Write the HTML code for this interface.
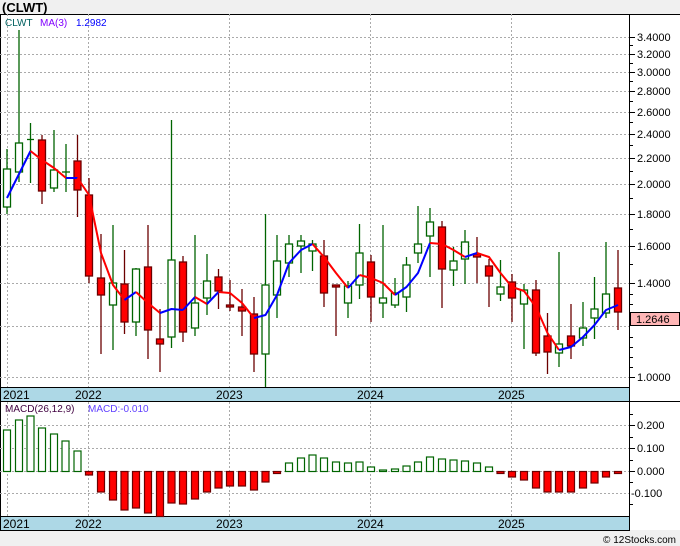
<!DOCTYPE html>
<html><head><style>
html,body{margin:0;padding:0;background:#f0f0f0;width:680px;height:546px;overflow:hidden}
svg{display:block;font-family:"Liberation Sans","DejaVu Sans",sans-serif}
</style></head><body>
<svg width="680" height="546" viewBox="0 0 680 546" xmlns="http://www.w3.org/2000/svg">
<rect x="0" y="0" width="680" height="546" fill="#f0f0f0"/>
<text x="2" y="12" font-size="13" font-weight="bold" fill="#000">(CLWT)</text>
<rect x="0" y="14" width="680" height="516" fill="#fff"/>
<line x1="0" y1="14.5" x2="680" y2="14.5" stroke="#000"/>
<line x1="0.5" y1="14" x2="0.5" y2="530" stroke="#000"/>
<line x1="629.5" y1="14" x2="629.5" y2="530" stroke="#000"/>
<g stroke="#aaa" stroke-dasharray="2,2" stroke-width="1">
<line x1="0" y1="37.5" x2="629" y2="37.5"/><line x1="0" y1="54.5" x2="629" y2="54.5"/><line x1="0" y1="72.5" x2="629" y2="72.5"/><line x1="0" y1="91.5" x2="629" y2="91.5"/><line x1="0" y1="112.5" x2="629" y2="112.5"/><line x1="0" y1="134.5" x2="629" y2="134.5"/><line x1="0" y1="158.5" x2="629" y2="158.5"/><line x1="0" y1="184.5" x2="629" y2="184.5"/><line x1="0" y1="214.5" x2="629" y2="214.5"/><line x1="0" y1="246.5" x2="629" y2="246.5"/><line x1="0" y1="283.5" x2="629" y2="283.5"/><line x1="0" y1="326.5" x2="629" y2="326.5"/><line x1="0" y1="377.5" x2="629" y2="377.5"/>
<line x1="0" y1="425.5" x2="629" y2="425.5"/><line x1="0" y1="448.5" x2="629" y2="448.5"/><line x1="0" y1="471.5" x2="629" y2="471.5"/><line x1="0" y1="493.5" x2="629" y2="493.5"/>
<line x1="7.5" y1="14" x2="7.5" y2="516"/><line x1="88.5" y1="14" x2="88.5" y2="516"/><line x1="229.5" y1="14" x2="229.5" y2="516"/><line x1="370.5" y1="14" x2="370.5" y2="516"/><line x1="511.5" y1="14" x2="511.5" y2="516"/>
</g>
<g stroke-width="1.3">
<g stroke="#006400" fill="#fff">
<line x1="7" y1="149" x2="7" y2="214"/><rect x="3.5" y="169" width="7" height="38"/>
<line x1="19" y1="30" x2="19" y2="182"/><rect x="15.5" y="143" width="7" height="29"/>
<line x1="30.5" y1="123" x2="30.5" y2="183"/><line x1="27" y1="139.5" x2="34" y2="139.5"/>
<line x1="54" y1="130" x2="54" y2="192"/><rect x="50.5" y="170" width="7" height="18"/>
<line x1="66" y1="144" x2="66" y2="192"/><line x1="62" y1="172" x2="70" y2="172"/>
<line x1="113" y1="225" x2="113" y2="350"/><rect x="109.5" y="283" width="7" height="22"/>
<line x1="136" y1="268" x2="136" y2="336"/><rect x="132.5" y="269" width="7" height="53"/>
<line x1="171.5" y1="120" x2="171.5" y2="348"/><rect x="168" y="260" width="7" height="77"/>
<line x1="195" y1="235" x2="195" y2="336"/><rect x="191.5" y="303" width="7" height="25"/>
<line x1="207" y1="254" x2="207" y2="315"/><rect x="203.5" y="281" width="7" height="17"/>
<line x1="265.5" y1="214" x2="265.5" y2="387"/><rect x="262" y="285" width="7" height="69"/>
<line x1="277" y1="235" x2="277" y2="318"/><rect x="273.5" y="261" width="7" height="34"/>
<line x1="289" y1="235" x2="289" y2="277"/><rect x="285.5" y="244" width="7" height="19"/>
<line x1="301" y1="235" x2="301" y2="273"/><rect x="297.5" y="241" width="7" height="5"/>
<line x1="312.5" y1="240" x2="312.5" y2="271"/><rect x="309" y="244" width="7" height="7"/>
<line x1="348" y1="281" x2="348" y2="318"/><rect x="344.5" y="286" width="7" height="17"/>
<line x1="359.5" y1="224" x2="359.5" y2="299"/><rect x="356" y="253" width="7" height="32"/>
<line x1="383" y1="225" x2="383" y2="318"/><rect x="379.5" y="298" width="7" height="5"/>
<line x1="395" y1="278" x2="395" y2="308"/><rect x="391.5" y="293" width="7" height="12"/>
<line x1="406.5" y1="257" x2="406.5" y2="312"/><rect x="403" y="265" width="7" height="32"/>
<line x1="418" y1="206" x2="418" y2="263"/><rect x="414.5" y="244" width="7" height="9"/>
<line x1="430" y1="208" x2="430" y2="277"/><rect x="426.5" y="222" width="7" height="14"/>
<line x1="453.5" y1="247" x2="453.5" y2="286"/><rect x="450" y="261" width="7" height="9"/>
<line x1="465" y1="230" x2="465" y2="284"/><rect x="461.5" y="242" width="7" height="17"/>
<line x1="500.5" y1="260" x2="500.5" y2="301"/><rect x="497" y="287" width="7" height="7"/>
<line x1="524" y1="284" x2="524" y2="349"/><rect x="520.5" y="290" width="7" height="14"/>
<line x1="559" y1="252" x2="559" y2="367"/><rect x="555.5" y="344" width="7" height="9"/>
<line x1="583" y1="302" x2="583" y2="346"/><rect x="579.5" y="328" width="7" height="10"/>
<line x1="594.5" y1="277" x2="594.5" y2="339"/><rect x="591" y="309" width="7" height="9"/>
<line x1="606" y1="242" x2="606" y2="318"/><rect x="602.5" y="294" width="7" height="19"/>
</g>
<g stroke="#6b0000" fill="#ff0000">
<line x1="42" y1="135" x2="42" y2="204"/><rect x="38.5" y="140" width="7" height="51"/>
<line x1="77.5" y1="135" x2="77.5" y2="217"/><rect x="74" y="161" width="7" height="29"/>
<line x1="89" y1="178" x2="89" y2="283"/><rect x="85.5" y="195" width="7" height="81"/>
<line x1="101" y1="234" x2="101" y2="354"/><rect x="97.5" y="278" width="7" height="17"/>
<line x1="124.5" y1="250" x2="124.5" y2="334"/><rect x="121" y="284" width="7" height="38"/>
<line x1="148" y1="225" x2="148" y2="359"/><rect x="144.5" y="267" width="7" height="63"/>
<line x1="160" y1="309" x2="160" y2="372"/><rect x="156.5" y="339" width="7" height="5"/>
<line x1="183" y1="256" x2="183" y2="342"/><rect x="179.5" y="262" width="7" height="70"/>
<line x1="218.5" y1="269" x2="218.5" y2="309"/><rect x="215" y="277" width="7" height="14"/>
<line x1="230" y1="280" x2="230" y2="311"/><rect x="226.5" y="305" width="7" height="2"/>
<line x1="242" y1="289" x2="242" y2="336"/><rect x="238.5" y="307" width="7" height="4"/>
<line x1="254" y1="297" x2="254" y2="372"/><rect x="250.5" y="314" width="7" height="40"/>
<line x1="324" y1="240" x2="324" y2="307"/><rect x="320.5" y="256" width="7" height="37"/>
<line x1="336" y1="285" x2="336" y2="336"/><rect x="332.5" y="285" width="7" height="2"/>
<line x1="371" y1="255" x2="371" y2="322"/><rect x="367.5" y="262" width="7" height="35"/>
<line x1="442" y1="221" x2="442" y2="308"/><rect x="438.5" y="227" width="7" height="42"/>
<line x1="477" y1="237" x2="477" y2="283"/><rect x="473.5" y="254" width="7" height="3"/>
<line x1="489" y1="259" x2="489" y2="307"/><rect x="485.5" y="266" width="7" height="10"/>
<line x1="512" y1="274" x2="512" y2="322"/><rect x="508.5" y="282" width="7" height="16"/>
<line x1="536" y1="280" x2="536" y2="356"/><rect x="532.5" y="290" width="7" height="63"/>
<line x1="547.5" y1="313" x2="547.5" y2="374"/><rect x="544" y="336" width="7" height="16"/>
<line x1="571" y1="304" x2="571" y2="359"/><rect x="567.5" y="336" width="7" height="10"/>
<line x1="618" y1="250" x2="618" y2="330"/><rect x="614.5" y="288" width="7" height="24"/>
</g>
</g>
<g fill="none" stroke-width="2" stroke-linejoin="round">
<polyline stroke="#0000ff" points="7,198 19,174 30.5,151"/>
<polyline stroke="#ff0000" points="30.5,151 42,160 54,168 66,178"/>
<polyline stroke="#0000ff" points="66,178 77.5,178"/>
<polyline stroke="#ff0000" points="77.5,178 89,195 101,253 113,285 124.5,300"/>
<polyline stroke="#0000ff" points="124.5,300 136,292"/>
<polyline stroke="#ff0000" points="136,292 148,303 160,313"/>
<polyline stroke="#0000ff" points="160,313 171.5,309 183,310"/>
<polyline stroke="#0000ff" points="183,310 195,297"/>
<polyline stroke="#ff0000" points="195,297 207,304"/>
<polyline stroke="#0000ff" points="207,304 218.5,292"/>
<polyline stroke="#ff0000" points="218.5,292 230,293 242,303 254,318"/>
<polyline stroke="#0000ff" points="254,318 265.5,315 277,295 289,263 301,250 312.5,244"/>
<polyline stroke="#ff0000" points="312.5,244 324,257 336,273 348,288"/>
<polyline stroke="#0000ff" points="348,288 359.5,275"/>
<polyline stroke="#ff0000" points="359.5,275 371,278 383,283 395,295"/>
<polyline stroke="#0000ff" points="395,295 406.5,287 418,273 430,243"/>
<polyline stroke="#ff0000" points="430,243 442,244 453.5,250 465,257"/>
<polyline stroke="#0000ff" points="465,257 477,253"/>
<polyline stroke="#ff0000" points="477,253 489,257 500.5,273 512,287 524,291 536,307 547.5,333 559,350"/>
<polyline stroke="#0000ff" points="559,350 571,347 583,337 594.5,325 606,310 618,305"/>
</g>
<text x="5" y="26" font-size="10" fill="#006060">CLWT</text>
<text x="40" y="26" font-size="10" fill="#8000ff">MA(3)</text>
<text x="76" y="26" font-size="10" fill="#0000ff">1.2982</text>
<rect x="0.5" y="387.5" width="629" height="14" fill="#add8e6" stroke="#000"/>
<rect x="0.5" y="516.5" width="629" height="14" fill="#add8e6" stroke="#000"/>
<line x1="629" y1="401.5" x2="680" y2="401.5" stroke="#000"/>
<g font-size="12" fill="#000">
<text x="3" y="399">2021</text><text x="75" y="399">2022</text><text x="216" y="399">2023</text><text x="357" y="399">2024</text><text x="498" y="399">2025</text>
<text x="3" y="528">2021</text><text x="75" y="528">2022</text><text x="216" y="528">2023</text><text x="357" y="528">2024</text><text x="498" y="528">2025</text>
</g>
<g stroke-width="1.2">
<g stroke="#006400" fill="#fff">
<rect x="3.5" y="430" width="7" height="41.5"/><rect x="15.5" y="420" width="7" height="51.5"/><rect x="27" y="416" width="7" height="55.5"/><rect x="38.5" y="428" width="7" height="43.5"/><rect x="50.5" y="434" width="7" height="37.5"/><rect x="62" y="441" width="7" height="30.5"/><rect x="74" y="451" width="7" height="20.5"/>
<rect x="285.5" y="463" width="7" height="8.5"/><rect x="297.5" y="458" width="7" height="13.5"/><rect x="309" y="455" width="7" height="16.5"/><rect x="320.5" y="458" width="7" height="13.5"/><rect x="332.5" y="462" width="7" height="9.5"/><rect x="344.5" y="463" width="7" height="8.5"/><rect x="356" y="462" width="7" height="9.5"/><rect x="367.5" y="467" width="7" height="4.5"/><rect x="379.5" y="470" width="7" height="1.5"/><rect x="391.5" y="469" width="7" height="2.5"/><rect x="403" y="466" width="7" height="5.5"/><rect x="414.5" y="462" width="7" height="9.5"/><rect x="426.5" y="457" width="7" height="14.5"/><rect x="438.5" y="459" width="7" height="12.5"/><rect x="450" y="460" width="7" height="11.5"/><rect x="461.5" y="461" width="7" height="10.5"/><rect x="473.5" y="463" width="7" height="8.5"/><rect x="485.5" y="467" width="7" height="4.5"/>
</g>
<g stroke="#6b0000" fill="#ff0000">
<rect x="85.5" y="471.5" width="7" height="3.5"/><rect x="97.5" y="471.5" width="7" height="20.5"/><rect x="109.5" y="471.5" width="7" height="28.5"/><rect x="121" y="471.5" width="7" height="38.5"/><rect x="132.5" y="471.5" width="7" height="36.5"/><rect x="144.5" y="471.5" width="7" height="41.5"/><rect x="156.5" y="471.5" width="7" height="45"/><rect x="168" y="471.5" width="7" height="31.5"/><rect x="179.5" y="471.5" width="7" height="32.5"/><rect x="191.5" y="471.5" width="7" height="27.5"/><rect x="203.5" y="471.5" width="7" height="20.5"/><rect x="215" y="471.5" width="7" height="16.5"/><rect x="226.5" y="471.5" width="7" height="14.5"/><rect x="238.5" y="471.5" width="7" height="14.5"/><rect x="250.5" y="471.5" width="7" height="18.5"/><rect x="262" y="471.5" width="7" height="10.5"/><rect x="273.5" y="471.5" width="7" height="2"/>
<rect x="497" y="471.5" width="7" height="2"/><rect x="508.5" y="471.5" width="7" height="5.5"/><rect x="520.5" y="471.5" width="7" height="8.5"/><rect x="532.5" y="471.5" width="7" height="16.5"/><rect x="544" y="471.5" width="7" height="20.5"/><rect x="555.5" y="471.5" width="7" height="20.5"/><rect x="567.5" y="471.5" width="7" height="20.5"/><rect x="579.5" y="471.5" width="7" height="16.5"/><rect x="591" y="471.5" width="7" height="11.5"/><rect x="602.5" y="471.5" width="7" height="5.5"/><rect x="614.5" y="471.5" width="7" height="2"/>
</g>
</g>
<text x="5" y="412" font-size="10" fill="#400040">MACD(26,12,9)</text>
<text x="88" y="412" font-size="10" fill="#6040ff">MACD:-0.010</text>
<g stroke="#000">
<line x1="629" y1="37.5" x2="635" y2="37.5"/><line x1="629" y1="54.5" x2="635" y2="54.5"/><line x1="629" y1="72.5" x2="635" y2="72.5"/><line x1="629" y1="91.5" x2="635" y2="91.5"/><line x1="629" y1="112.5" x2="635" y2="112.5"/><line x1="629" y1="134.5" x2="635" y2="134.5"/><line x1="629" y1="158.5" x2="635" y2="158.5"/><line x1="629" y1="184.5" x2="635" y2="184.5"/><line x1="629" y1="214.5" x2="635" y2="214.5"/><line x1="629" y1="246.5" x2="635" y2="246.5"/><line x1="629" y1="283.5" x2="635" y2="283.5"/><line x1="629" y1="377.5" x2="635" y2="377.5"/>
<line x1="629" y1="45.5" x2="633" y2="45.5"/><line x1="629" y1="63.5" x2="633" y2="63.5"/><line x1="629" y1="81.5" x2="633" y2="81.5"/><line x1="629" y1="101.5" x2="633" y2="101.5"/><line x1="629" y1="122.5" x2="633" y2="122.5"/><line x1="629" y1="145.5" x2="633" y2="145.5"/><line x1="629" y1="171.5" x2="633" y2="171.5"/><line x1="629" y1="198.5" x2="633" y2="198.5"/><line x1="629" y1="229.5" x2="633" y2="229.5"/><line x1="629" y1="264.5" x2="633" y2="264.5"/><line x1="629" y1="294.5" x2="633" y2="294.5"/><line x1="629" y1="304.5" x2="633" y2="304.5"/><line x1="629" y1="337.5" x2="633" y2="337.5"/><line x1="629" y1="347.5" x2="633" y2="347.5"/><line x1="629" y1="357.5" x2="633" y2="357.5"/><line x1="629" y1="367.5" x2="633" y2="367.5"/>
<line x1="629" y1="425.5" x2="635" y2="425.5"/><line x1="629" y1="448.5" x2="635" y2="448.5"/><line x1="629" y1="471.5" x2="635" y2="471.5"/>
<line x1="629" y1="414.5" x2="633" y2="414.5"/><line x1="629" y1="437.5" x2="633" y2="437.5"/><line x1="629" y1="460.5" x2="633" y2="460.5"/><line x1="629" y1="482.5" x2="633" y2="482.5"/><line x1="629" y1="504.5" x2="633" y2="504.5"/>
</g>
<g font-size="11" fill="#000">
<text x="637" y="41">3.4000</text><text x="637" y="58">3.2000</text><text x="637" y="76">3.0000</text><text x="637" y="95">2.8000</text><text x="637" y="116">2.6000</text><text x="637" y="138">2.4000</text><text x="637" y="162">2.2000</text><text x="637" y="188">2.0000</text><text x="637" y="218">1.8000</text><text x="637" y="250">1.6000</text><text x="637" y="287">1.4000</text><text x="637" y="381">1.0000</text>
<text x="637" y="429">0.200</text><text x="637" y="452">0.100</text><text x="637" y="475">0.000</text><text x="631" y="497">-0.100</text>
</g>
<rect x="630.5" y="312.5" width="49" height="13" fill="#ffb6b6" stroke="#000"/>
<text x="636" y="323" font-size="11" fill="#000">1.2646</text>
<text x="676" y="543" font-size="10" fill="#000" text-anchor="end">© 12Stocks.com</text>
</svg>
</body></html>
